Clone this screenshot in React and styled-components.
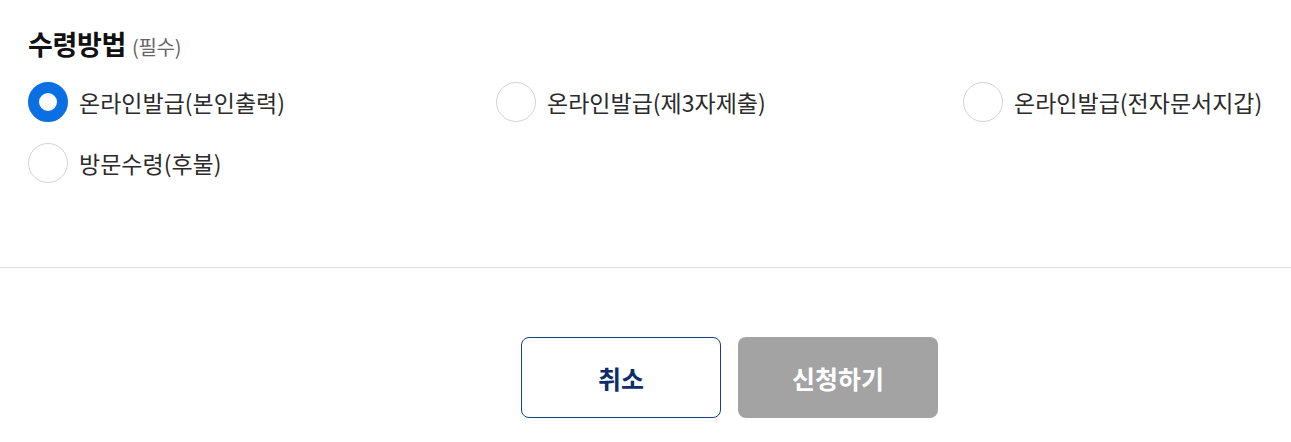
import { useState } from "react";
import styled, { createGlobalStyle } from "styled-components";

const GlobalStyle = createGlobalStyle`
  html, body {
    margin: 0;
    padding: 0;
    background: #ffffff;
  }

  body {
    font-family: "Noto Sans CJK KR", "Noto Sans", sans-serif;
    color: #333333;
  }
`;

const OPTIONS = [
  "온라인발급(본인출력)",
  "온라인발급(제3자제출)",
  "온라인발급(전자문서지갑)",
  "방문수령(후불)",
];

function App() {
  const [selected, setSelected] = useState(0);

  return (
    <Page>
      <GlobalStyle />
      <Section>
        <Title>
          수령방법 <Required>(필수)</Required>
        </Title>
        <OptionGrid>
          {OPTIONS.map((label, i) => (
            <Option key={label} onClick={() => setSelected(i)}>
              <Radio $checked={selected === i} />
              <Label>{label}</Label>
            </Option>
          ))}
        </OptionGrid>
      </Section>
      <Divider />
      <Buttons>
        <CancelButton>취소</CancelButton>
        <SubmitButton disabled>신청하기</SubmitButton>
      </Buttons>
    </Page>
  );
}

const Page = styled.div`
  width: 1291px;
  height: 442px;
  overflow: hidden;
`;

const Section = styled.section`
  padding: 26px 28px 0;
  height: 239px;
  box-sizing: border-box;
`;

const Title = styled.h3`
  margin: 0;
  font-size: 27px;
  font-weight: 700;
  line-height: 36px;
  color: #111111;
  letter-spacing: -0.3px;
`;

const Required = styled.span`
  font-size: 20px;
  font-weight: 400;
  color: #666666;
  letter-spacing: -0.3px;
`;

const OptionGrid = styled.div`
  margin-top: 17px;
  display: grid;
  grid-template-columns: 468px 467px 1fr;
  row-gap: 21px;
`;

const Option = styled.label`
  display: flex;
  align-items: center;
  gap: 11px;
  cursor: pointer;
`;

const Radio = styled.span`
  box-sizing: border-box;
  flex: none;
  width: 40px;
  height: 40px;
  border-radius: 50%;
  background: #ffffff;
  border: ${({ $checked }) =>
    $checked ? "11px solid #0a6fe3" : "1px solid #d3d3d3"};
`;

const Label = styled.span`
  font-size: 23px;
  line-height: 40px;
  color: #2b2b2b;
  white-space: nowrap;
`;

const Divider = styled.hr`
  margin: 28px 0 0;
  border: 0;
  border-top: 1px solid #d8dde8;
`;

const Buttons = styled.div`
  display: flex;
  justify-content: center;
  gap: 17px;
  padding: 69px 0 0 168px;
`;

const BaseButton = styled.button`
  box-sizing: border-box;
  width: 200px;
  height: 81px;
  border-radius: 8px;
  font-family: inherit;
  font-size: 25px;
  font-weight: 700;
`;

const CancelButton = styled(BaseButton)`
  background: #ffffff;
  border: 1px solid #183f86;
  color: #0b2d69;
  cursor: pointer;
`;

const SubmitButton = styled(BaseButton)`
  background: #a3a3a3;
  border: 0;
  color: #ffffff;
`;

export default App;
